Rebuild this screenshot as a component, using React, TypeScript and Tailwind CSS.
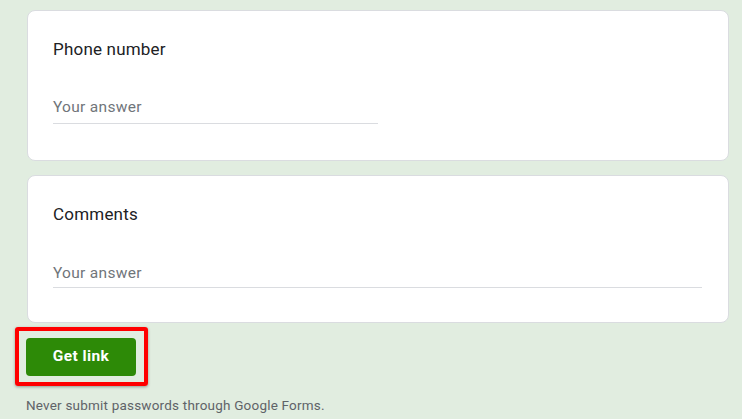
import React from "react";

function Question({
  title,
  lineClass,
  cardClass,
  answerClass,
}: {
  title: string;
  lineClass: string;
  cardClass: string;
  answerClass: string;
}) {
  return (
    <div className={`bg-white border border-[#dadce0] rounded-lg pl-[25px] pr-[26px] ${cardClass}`}>
      <div className="text-[17px] leading-[24px] text-[#202124] tracking-[0.2px]">{title}</div>
      <div className={`border-b border-[#dadce0] ${lineClass}`}>
        <div className={`text-[15.5px] leading-[20px] text-[#70757a] tracking-[0.3px] ${answerClass}`}>Your answer</div>
      </div>
    </div>
  );
}

export default function App() {
  return (
    <div
      className="w-[742px] h-[419px] bg-[#e1ede0] overflow-hidden pt-[10px] pl-[27px] pr-[13px]"
      style={{ fontFamily: "Roboto, 'Liberation Sans', sans-serif" }}
    >
      <div className="flex flex-col gap-[14px]">
        <Question
          title="Phone number"
          lineClass="w-[325px] mt-[36px]"
          cardClass="h-[151px] pt-[26px]"
          answerClass="pb-[6px]"
        />
        <Question
          title="Comments"
          lineClass="w-full mt-[37px]"
          cardClass="h-[148px] pt-[26px]"
          answerClass="pb-[4px]"
        />
      </div>
      <div className="ml-[-12px] mt-[4px] w-[133px] h-[59px] border-[4px] border-[#ff0000] rounded-[3px] p-[7px] shadow-[0_1px_3px_rgba(0,0,0,0.35)]">
        <button className="w-[110px] h-[38px] bg-[#2d8a07] rounded-[4px] text-white text-[15.5px] font-bold tracking-[0.4px]">
          Get link
        </button>
      </div>
      <div className="mt-[10px] ml-[-1px] text-[13.5px] leading-[18px] text-[#5f6368] tracking-[0.2px]">
        Never submit passwords through Google Forms.
      </div>
    </div>
  );
}
